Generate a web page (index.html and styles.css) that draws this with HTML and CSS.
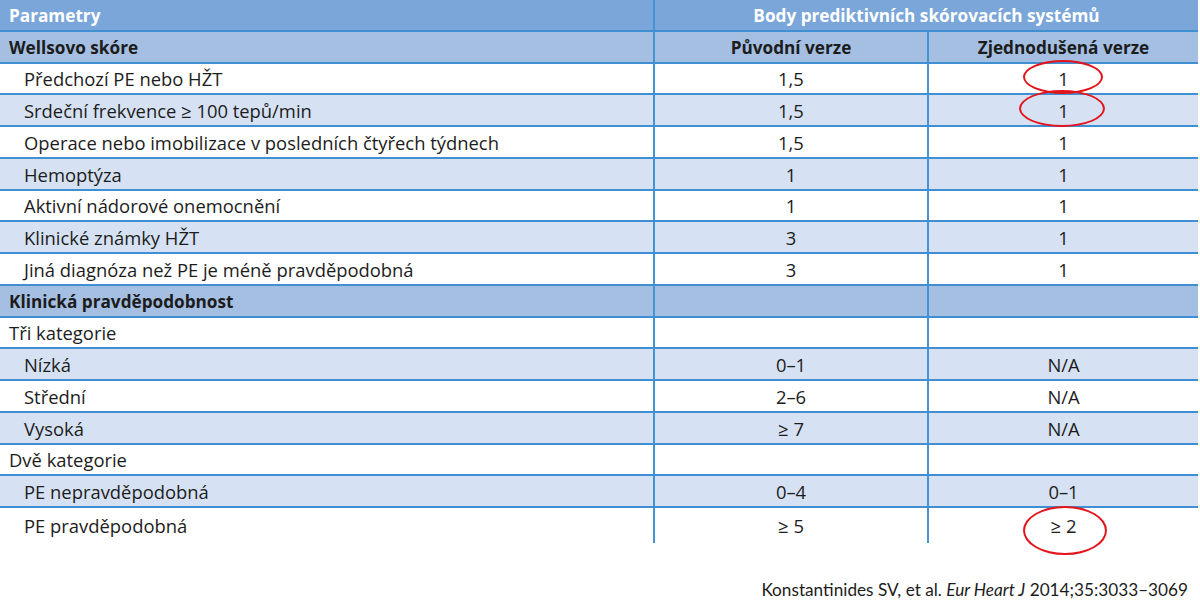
FILE: index.html
```html
<!DOCTYPE html>
<html lang="cs">
<head>
<meta charset="utf-8">
<title>Wellsovo skóre</title>
<link rel="stylesheet" href="styles.css">
</head>
<body>
<div class="tbl">
  <div class="row head">
    <div class="c c1">Parametry</div>
    <div class="c span">Body prediktivních skórovacích systémů</div>
  </div>
  <div class="row sub">
    <div class="c c1">Wellsovo skóre</div>
    <div class="c c2">Původní verze</div>
    <div class="c c3">Zjednodušená verze</div>
  </div>
  <div class="row white">
    <div class="c c1 ind">Předchozí PE nebo HŽT</div>
    <div class="c c2">1,5</div>
    <div class="c c3"><span class="ring r1"></span>1</div>
  </div>
  <div class="row light">
    <div class="c c1 ind">Srdeční frekvence ≥ 100 tepů/min</div>
    <div class="c c2">1,5</div>
    <div class="c c3"><span class="ring r2"></span>1</div>
  </div>
  <div class="row white">
    <div class="c c1 ind">Operace nebo imobilizace v posledních čtyřech týdnech</div>
    <div class="c c2">1,5</div>
    <div class="c c3">1</div>
  </div>
  <div class="row light">
    <div class="c c1 ind">Hemoptýza</div>
    <div class="c c2">1</div>
    <div class="c c3">1</div>
  </div>
  <div class="row white">
    <div class="c c1 ind">Aktivní nádorové onemocnění</div>
    <div class="c c2">1</div>
    <div class="c c3">1</div>
  </div>
  <div class="row light">
    <div class="c c1 ind">Klinické známky HŽT</div>
    <div class="c c2">3</div>
    <div class="c c3">1</div>
  </div>
  <div class="row white">
    <div class="c c1 ind">Jiná diagnóza než PE je méně pravděpodobná</div>
    <div class="c c2">3</div>
    <div class="c c3">1</div>
  </div>
  <div class="row sub">
    <div class="c c1">Klinická pravděpodobnost</div>
    <div class="c c2"></div>
    <div class="c c3"></div>
  </div>
  <div class="row white">
    <div class="c c1 plain">Tři kategorie</div>
    <div class="c c2"></div>
    <div class="c c3"></div>
  </div>
  <div class="row light">
    <div class="c c1 ind">Nízká</div>
    <div class="c c2">0–1</div>
    <div class="c c3">N/A</div>
  </div>
  <div class="row white">
    <div class="c c1 ind">Střední</div>
    <div class="c c2">2–6</div>
    <div class="c c3">N/A</div>
  </div>
  <div class="row light">
    <div class="c c1 ind">Vysoká</div>
    <div class="c c2">≥ 7</div>
    <div class="c c3">N/A</div>
  </div>
  <div class="row white">
    <div class="c c1 plain">Dvě kategorie</div>
    <div class="c c2"></div>
    <div class="c c3"></div>
  </div>
  <div class="row light">
    <div class="c c1 ind">PE nepravděpodobná</div>
    <div class="c c2">0–4</div>
    <div class="c c3">0–1</div>
  </div>
  <div class="row white last">
    <div class="c c1 ind">PE pravděpodobná</div>
    <div class="c c2">≥ 5</div>
    <div class="c c3"><span class="ring r3"></span>≥ 2</div>
  </div>
</div>
<p class="cite">Konstantinides SV, et al. <i>Eur Heart J</i> 2014;35:3033–3069</p>
</body>
</html>
```
FILE: styles.css
```css
html, body {
  margin: 0;
  padding: 0;
  background: #ffffff;
}
body {
  width: 1200px;
  height: 607px;
  overflow: hidden;
  font-family: "Open Sans", "Noto Sans", sans-serif;
  color: #1c1c1c;
}
.tbl {
  width: 1198px;
}
.row {
  display: grid;
  grid-template-columns: 653px 274px 271px;
  height: 31.78px;
  box-sizing: border-box;
  border-bottom: 2px solid #3f8fd2;
}
.row.last {
  border-bottom: none;
  height: 34.6px;
}
.head {
  background: #7ba6d9;
  color: #ffffff;
  font-weight: 700;
}
.sub {
  background: #a5bfe3;
  font-weight: 700;
}
.white { background: #ffffff; }
.light { background: #d6e2f3; }
.c {
  position: relative;
  display: flex;
  align-items: center;
  padding-top: 2px;
  font-size: 18.4px;
  line-height: 1;
  box-sizing: border-box;
}
.head .c, .sub .c {
  font-size: 17.2px;
}
.c1 {
  padding-left: 9px;
}
.c1.ind {
  padding-left: 24px;
}
.c2, .c3, .span {
  justify-content: center;
  border-left: 2px solid #4494d4;
}
.span {
  grid-column: 2 / 4;
}
.ring {
  position: absolute;
  box-sizing: border-box;
  border: 2.5px solid #e3141c;
  border-radius: 50%;
}
.r1 {
  width: 80px;
  height: 34px;
  left: calc(50% - 41px);
  top: -4px;
}
.r2 {
  width: 86px;
  height: 37px;
  left: calc(50% - 45px);
  top: -5px;
}
.r3 {
  width: 84px;
  height: 49px;
  left: calc(50% - 41px);
  top: -2px;
}
.cite {
  margin: 36px 0 0 0;
  padding-right: 12px;
  text-align: right;
  font-family: "Lato", "Open Sans", sans-serif;
  font-size: 17.2px;
  color: #1c1c1c;
}
```
